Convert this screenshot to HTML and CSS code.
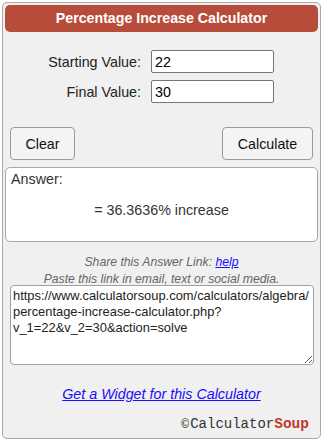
FILE: index.html
```html
<!DOCTYPE html>
<html>
<head>
<meta charset="utf-8">
<link rel="stylesheet" href="styles.css">
</head>
<body>
<div class="calc">
  <div class="title">Percentage Increase Calculator</div>
  <div class="fields">
    <div class="row"><label class="lbl">Starting Value:</label><input class="inp" type="text" value="22"></div>
    <div class="row"><label class="lbl">Final Value:</label><input class="inp" type="text" value="30"></div>
  </div>
  <div class="buttons">
    <button class="btn">Clear</button>
    <button class="btn btn-calc">Calculate</button>
  </div>
  <div class="answer">
    <div class="ans-label">Answer:</div>
    <div class="ans-value">= 36.3636% increase</div>
  </div>
  <div class="share">
    <div>Share this Answer Link: <a href="#" class="link">help</a></div>
    <div>Paste this link in email, text or social media.</div>
  </div>
  <textarea class="url">https://www.calculatorsoup.com/calculators/algebra/percentage-increase-calculator.php?v_1=22&amp;v_2=30&amp;action=solve</textarea>
  <div class="widget"><a href="#" class="link">Get a Widget for this Calculator</a></div>
  <div class="logo"><span class="copy">©</span><span class="calcw">Calculator</span><span class="soup">Soup</span></div>
</div>
</body>
</html>
```
FILE: styles.css
```css
html, body { margin: 0; padding: 0; background: #fff; }
body { font-family: Arial, "Liberation Sans", sans-serif; color: #222; }
.calc {
  box-sizing: border-box;
  width: 319px;
  height: 437px;
  margin: 2px 0 0 2px;
  border: 1px solid #a8a8a8;
  border-radius: 5px;
  background: #f0f0f0;
  padding: 2px;
  display: flex;
  flex-direction: column;
}
.title {
  background: #b84c3b;
  color: #fff;
  font-weight: bold;
  font-size: 14.2px;
  text-align: center;
  height: 27px;
  line-height: 27px;
  border-radius: 5px;
}
.fields { display: flex; flex-direction: column; gap: 7px; margin-top: 18px; }
.row { display: flex; align-items: center; }
.lbl { width: 136px; text-align: right; font-size: 14.3px; margin-right: 10px; color: #222; }
.inp {
  box-sizing: border-box;
  width: 123px; height: 23px;
  border: 1px solid #767676;
  border-radius: 2px;
  font: 14.3px Arial, "Liberation Sans", sans-serif;
  color: #000;
  padding: 0 3px;
  background: #fff;
}
.buttons { display: flex; justify-content: space-between; margin-top: 24px; padding: 0 5px 0 5px; }
.btn {
  box-sizing: border-box;
  height: 33px;
  width: 65px;
  border: 1px solid #9a9a9a;
  border-radius: 4px;
  background: #f4f4f4;
  font: 14.3px Arial, "Liberation Sans", sans-serif;
  color: #111;
}
.btn-calc { width: 91px; }
.answer {
  box-sizing: border-box;
  margin-top: 7px;
  height: 75px;
  background: #fff;
  border: 1px solid #a8a8a8;
  border-radius: 5px;
  padding: 3px 5px;
  font-size: 14.3px;
}
.ans-label { color: #333; }
.ans-value { text-align: center; margin-top: 15px; color: #333; }
.share {
  margin-top: 12px;
  text-align: center;
  font-style: italic;
  font-size: 12.2px;
  line-height: 17px;
  color: #666;
}
.link { color: #1a0dff; text-decoration: underline; }
.url {
  box-sizing: border-box;
  display: block;
  margin: -3px 4px 0 5px;
  width: 304px;
  height: 80px;
  border: 1px solid #a0a0a0;
  border-radius: 4px;
  font: 12.9px Arial, "Liberation Sans", sans-serif;
  line-height: 16px;
  color: #222;
  padding: 2px 1px 2px 2px;
  background: #fff;
  resize: both;
  overflow: hidden;
}
.widget { text-align: center; margin-top: 21px; font-style: italic; font-size: 14.3px; }
.logo { text-align: right; margin-top: 12px; padding-right: 9px; font-size: 15px; }
.copy { font-family: "Liberation Mono", monospace; font-size: 13px; color: #333; margin-right: 1px; }
.calcw { font-family: "Liberation Mono", "Courier New", monospace; color: #333; font-size: 14px; }
.soup { font-family: "Liberation Mono", monospace; font-weight: bold; color: #c0392b; font-size: 14.5px; }
```
